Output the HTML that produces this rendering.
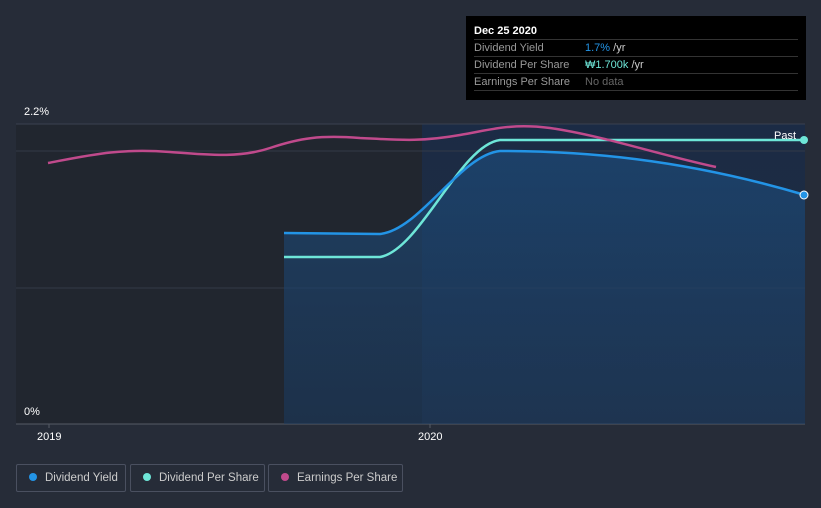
<html><head><style>
body{margin:0;background:#262c38;width:821px;height:508px;overflow:hidden;font-family:"Liberation Sans",sans-serif;position:relative}
.t{position:absolute;color:#fff;font-size:11px}
.tip{position:absolute;left:466px;top:16px;width:340px;height:84px;background:#000}
.row{position:absolute;left:8px;width:324px;border-bottom:1px solid #333;font-size:11px;color:#999;height:16px;line-height:16px}
.leg{position:absolute;top:464px;height:28px;border:1px solid #4a5060;border-radius:2px;color:#ccc;font-size:11.5px;line-height:26px;box-sizing:border-box;white-space:nowrap}
.leg i{display:inline-block;width:8px;height:8px;border-radius:50%;margin:0 8px 0 12px;vertical-align:0}
</style></head><body>
<svg width="821" height="508" style="position:absolute;left:0;top:0">
<defs><linearGradient id="g" x1="0" y1="0" x2="0" y2="1"><stop offset="0" stop-color="#1d4a78" stop-opacity=".7"/><stop offset="1" stop-color="#1a3a60" stop-opacity=".55"/></linearGradient>
<linearGradient id="f" x1="0" y1="0" x2="0" y2="1"><stop offset="0" stop-color="#1b2b45"/><stop offset="1" stop-color="#222d3d"/></linearGradient></defs>
<rect x="16" y="124" width="406" height="300" fill="#21262f"/>
<rect x="422" y="124" width="383" height="300" fill="url(#f)"/>
<line x1="16" y1="124" x2="805" y2="124" stroke="#3a4150"/>
<line x1="16" y1="151" x2="805" y2="151" stroke="#333a47"/>
<line x1="16" y1="288" x2="805" y2="288" stroke="#333a47"/>
<line x1="16" y1="424" x2="805" y2="424" stroke="#555b66"/>
<line x1="49" y1="424" x2="49" y2="428" stroke="#555b66"/>
<line x1="430" y1="424" x2="430" y2="428" stroke="#555b66"/>
<path d="M284 233 L380 234 C420 230 460 155 500 151 C580 151 680 158 805 195 L805 424 L284 424Z" fill="url(#g)"/>
<path d="M284 257 L380 257 C420 250 460 145 500 140 L805 140" fill="none" stroke="#6ee6d8" stroke-width="2.5"/>
<path d="M284 233 L380 234 C420 230 460 155 500 151 C580 151 680 158 805 195" fill="none" stroke="#2394e6" stroke-width="2.5"/>
<path d="M48 163 C90 155 120 148 170 152 C210 155 240 158 270 148 C300 138 320 135 360 138 C400 140 420 142 460 135 C490 130 510 123 550 128 C600 135 660 155 716 167" fill="none" stroke="#c04a8c" stroke-width="2.5"/>
<circle cx="804" cy="140" r="4" fill="#6ee6d8"/>
<circle cx="804" cy="195" r="4" fill="#2394e6" stroke="#fff" stroke-width="1"/>
</svg>
<div class="t" style="left:24px;top:106px">2.2%</div>
<div class="t" style="left:24px;top:406px">0%</div>
<div class="t" style="left:37px;top:431px">2019</div>
<div class="t" style="left:418px;top:431px">2020</div>
<div class="t" style="left:774px;top:130px">Past</div>
<div class="tip">
<div class="row" style="top:7px;color:#fff;font-weight:bold">Dec 25 2020</div>
<div class="row" style="top:24px">Dividend Yield<span style="position:absolute;left:111px;color:#2394e6">1.7% <span style="color:#ccc">/yr</span></span></div>
<div class="row" style="top:41px">Dividend Per Share<span style="position:absolute;left:111px;color:#6ee6d8">₩1.700k <span style="color:#ccc">/yr</span></span></div>
<div class="row" style="top:58px">Earnings Per Share<span style="position:absolute;left:111px;color:#666">No data</span></div>
</div>
<div class="leg" style="left:16px;width:110px"><i style="background:#2394e6"></i>Dividend Yield</div>
<div class="leg" style="left:130px;width:135px"><i style="background:#6ee6d8"></i>Dividend Per Share</div>
<div class="leg" style="left:268px;width:135px"><i style="background:#c04a8c"></i>Earnings Per Share</div>
</body></html>
